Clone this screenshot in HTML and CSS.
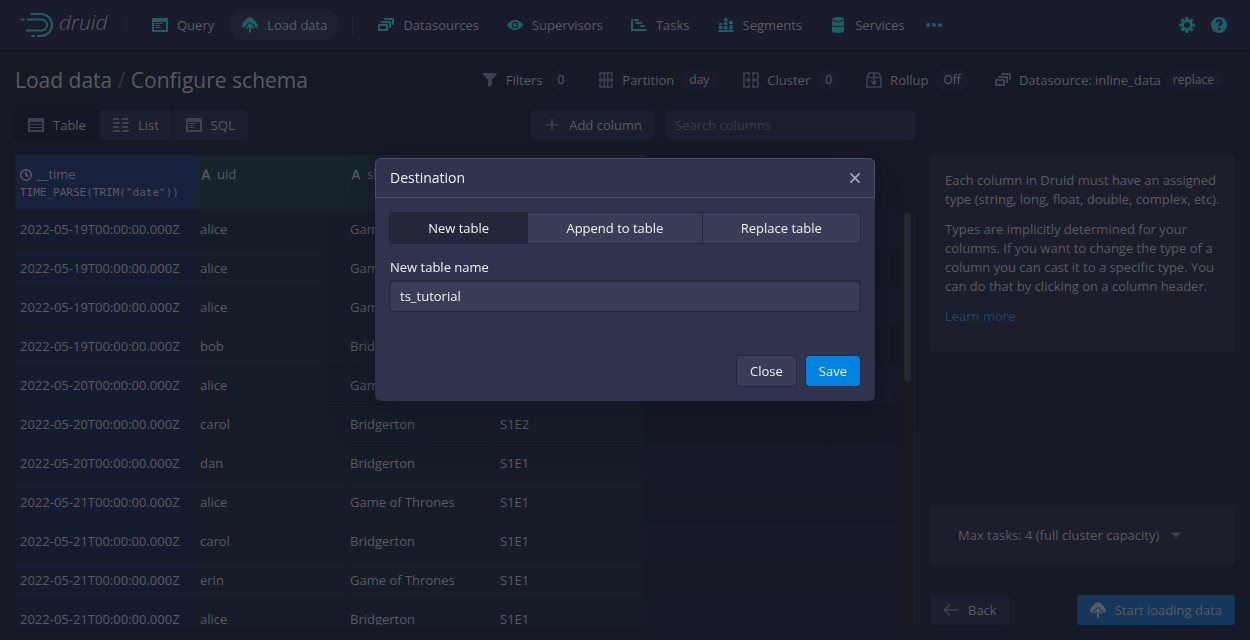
FILE: index.html
```html
<!DOCTYPE html>
<html lang="en">
<head>
<meta charset="utf-8">
<title>Druid - Load data</title>
<link rel="stylesheet" href="styles.css">
</head>
<body>
<svg class="sprite" aria-hidden="true">
  <symbol id="application" viewBox="0 0 16 16"><path d="M3.5 7h7c.28 0 .5-.22.5-.5s-.22-.5-.5-.5h-7c-.28 0-.5.22-.5.5s.22.5.5.5zM15 1H1c-.55 0-1 .45-1 1v12c0 .55.45 1 1 1h14c.55 0 1-.45 1-1V2c0-.55-.45-1-1-1zm-1 12H2V5h12v8zM3.5 9h4c.28 0 .5-.22.5-.5S7.78 8 7.5 8h-4c-.28 0-.5.22-.5.5s.22.5.5.5zm0 2h5c.28 0 .5-.22.5-.5s-.22-.5-.5-.5h-5c-.28 0-.5.22-.5.5s.22.5.5.5z"/></symbol>
  <symbol id="cloud-upload" viewBox="0 0 16 16"><path d="M8.710 6.600a1 1 0 00-1.420 0l-3.300 3.300a1 1 0 001.420 1.420L7 9.730V15a1 1 0 002 0V9.730l1.590 1.590a1 1 0 001.420-1.420zM12.200 3.200C11.500 1.300 9.900.2 8 .2S4.500 1.300 3.900 3.100C2.500 3.300 1.700 4.300 1.600 5.700.6 6.300 0 7.300 0 8.500c0 1.400.8 2.500 2.200 2.800.1-1 .4-1.700 1-2.300L6.400 5.800c.9-.9 2.300-.9 3.200 0L12.800 9c.6.6.9 1.400 1 2.300 1.400-.3 2.200-1.400 2.200-2.800 0-1.200-.6-2.200-1.600-2.800-.1-1.400-.9-2.300-2.200-2.500z"/></symbol>
  <symbol id="multi-select" viewBox="0 0 16 16"><path d="M12 3.980H4c-.55 0-1 .45-1 1v1h8v5h1c.55 0 1-.45 1-1v-5c0-.55-.45-1-1-1zm3-3H7c-.55 0-1 .45-1 1v1h8v5h1c.55 0 1-.45 1-1v-5c0-.55-.45-1-1-1zm-6 6H1c-.55 0-1 .45-1 1v5c0 .55.45 1 1 1h8c.55 0 1-.45 1-1v-5c0-.55-.45-1-1-1zm-1 5H2v-3h6v3z"/></symbol>
  <symbol id="eye" viewBox="0 0 16 16"><path fill-rule="evenodd" d="M8 3C4.500 3 1.500 5.400 0 8c1.500 2.600 4.500 5 8 5s6.500-2.400 8-5c-1.500-2.600-4.500-5-8-5zm0 1.800a3.200 3.200 0 110 6.400 3.200 3.200 0 010-6.400z"/><path fill-rule="evenodd" d="M8 5.900a2.100 2.100 0 100 4.200 2.100 2.100 0 000-4.200zm.7.800a.7.7 0 110 1.400.7.7 0 010-1.400z"/></symbol>
  <symbol id="gantt" viewBox="0 0 16 16"><path d="M1 2c.6 0 1 .4 1 1v9h13c.6 0 1 .4 1 1s-.4 1-1 1H1c-.6 0-1-.4-1-1V3c0-.6.4-1 1-1zM4 2h3a1 1 0 010 2H4a1 1 0 010-2zM5 5h5a1 1 0 010 2H5a1 1 0 010-2zM10 8h3a1 1 0 010 2h-3a1 1 0 010-2z"/></symbol>
  <symbol id="stacked" viewBox="0 0 16 16"><path d="M1 13h14a1 1 0 010 2H1a1 1 0 010-2zM2 6h2v2H1V7c0-.6.4-1 1-1zM1 9h3.500v3H1zM7 1h1.500c.6 0 1 .4 1 1v2H6V2c0-.6.4-1 1-1zM6 5h3.500v3H6zM6 9h3.500v3H6zM12 4h2c.6 0 1 .4 1 1v2h-4V5c0-.6.4-1 1-1zM11 8h4v1.500h-4zM11 10h4v2h-4z"/></symbol>
  <symbol id="database" viewBox="0 0 16 16"><path d="M8 0c3.300 0 6 .9 6 2s-2.700 2-6 2-6-.9-6-2 2.700-2 6-2zM2 3.600C3.200 4.500 5.500 5 8 5s4.800-.5 6-1.400V7.400C14 8.400 11.300 9.200 8 9.200S2 8.400 2 7.400zM2 8.900c1.200.9 3.500 1.400 6 1.400s4.800-.5 6-1.400V14c0 1.100-2.700 2-6 2s-6-.9-6-2z"/></symbol>
  <symbol id="more" viewBox="0 0 16 16"><circle cx="2" cy="8" r="2"/><circle cx="8" cy="8" r="2"/><circle cx="14" cy="8" r="2"/></symbol>
  <symbol id="cog" viewBox="0 0 16 16"><path d="M15.190 6.390h-1.850c-.11-.37-.27-.71-.45-1.040l1.360-1.360c.31-.31.31-.82 0-1.130l-1.130-1.130c-.31-.31-.82-.31-1.130 0l-1.360 1.360c-.33-.17-.67-.33-1.040-.44V.79c0-.44-.36-.8-.8-.8h-1.600c-.44 0-.8.36-.8.8v1.860c-.39.12-.75.28-1.100.47l-1.300-1.300c-.3-.3-.79-.3-1.090 0L1.820 2.910c-.3.3-.3.79 0 1.090l1.300 1.300c-.2.34-.36.7-.48 1.090H.79c-.44 0-.8.36-.8.8v1.600c0 .44.36.8.8.8h1.850c.11.37.27.71.45 1.040l-1.360 1.360c-.31.31-.31.82 0 1.130l1.130 1.130c.31.31.82.31 1.130 0l1.360-1.360c.33.18.67.33 1.040.44v1.860c0 .44.36.8.8.8h1.600c.44 0 .8-.36.8-.8v-1.860c.39-.12.75-.28 1.100-.47l1.300 1.300c.3.3.79.3 1.090 0l1.090-1.090c.3-.3.3-.79 0-1.090l-1.300-1.300c.19-.35.36-.71.48-1.100h1.850c.44 0 .8-.36.8-.8v-1.600a.816.816 0 00-.81-.79zm-7.200 4.600c-1.660 0-3-1.340-3-3s1.340-3 3-3 3 1.340 3 3-1.340 3-3 3z"/></symbol>
  <symbol id="help" viewBox="0 0 16 16"><circle cx="8" cy="8" r="8"/><path class="cut-line" d="M5.600 5.800C5.600 4.400 6.600 3.600 8 3.600s2.500.8 2.500 2.100c0 1.600-2.400 1.700-2.400 3.900"/><path class="cut" d="M7 11h2v2H7z"/></symbol>
  <symbol id="filter" viewBox="0 0 16 16"><path d="M13.990.99h-12a1.003 1.003 0 00-.71 1.710l4.710 4.710V14a1.003 1.003 0 001.710.71l2-2c.18-.18.29-.43.29-.71V7.410L14.700 2.700a1.003 1.003 0 00-.71-1.710z"/></symbol>
  <symbol id="split" viewBox="0 0 16 16"><path class="line-mid" d="M2 4.500V1H6.300V15H2V11.500M14 4.500V1H9.700V15H14V11.500M6 1H10M6 15H10M1 8H15M3.300 5.700L1 8L3.300 10.300M12.700 5.700L15 8L12.700 10.300"/></symbol>
  <symbol id="merge" viewBox="0 0 16 16"><path class="line-mid" d="M6 4.500V1H1V15H6V11.500M10 4.500V1H15V15H10V11.500M2 8H6.500M14 8H9.500M4.500 5.800L6.700 8L4.500 10.200M11.500 5.800L9.300 8L11.500 10.200"/></symbol>
  <symbol id="compressed" viewBox="0 0 16 16"><path class="line-mid" d="M1 5.500L3 1H13L15 5.500V15H1ZM1 5.500H15M8 1V12M5 9L8 12L11 9"/></symbol>
  <symbol id="table-icon" viewBox="0 0 16 16"><path fill-rule="evenodd" d="M1 1h14c.6 0 1 .4 1 1v12c0 .6-.4 1-1 1H1c-.6 0-1-.4-1-1V2c0-.6.4-1 1-1zm1 4v2h12V5zm0 3v2h12V8zm0 3v2h12v-2z"/></symbol>
  <symbol id="list-columns" viewBox="0 0 16 16"><path d="M0 1h6v2H0zM0 5h7v2H0zM0 9h6v2H0zM0 13h7v2H0zM9 1h6v2H9zM9 5h7v2H9zM9 9h6v2H9zM9 13h7v2H9z"/></symbol>
  <symbol id="plus" viewBox="0 0 16 16"><path class="line-mid" d="M8 2V14M2 8H14"/></symbol>
  <symbol id="time" viewBox="0 0 16 16"><path class="line" d="M8 1a7 7 0 100 14A7 7 0 008 1zM8 3.500V8.500L11 10"/></symbol>
  <symbol id="font" viewBox="0 0 16 16"><path class="line" d="M3 14L7.500 2H8.500L13 14M4.500 10H11.500"/></symbol>
  <symbol id="arrow-left" viewBox="0 0 16 16"><path class="line-mid" d="M15 8H2M7 2.500L1.500 8L7 13.500"/></symbol>
  <symbol id="cross" viewBox="0 0 16 16"><path class="line-mid" d="M3.400 3.400L12.600 12.600M12.600 3.400L3.400 12.600"/></symbol>
  <symbol id="caret" viewBox="0 0 16 16"><path d="M4 5.500h8c.5 0 .7.500.4.850L8.500 10.500a.7.7 0 01-1 0L3.600 6.350C3.300 6 3.500 5.500 4 5.500z"/></symbol>
</svg>

<header class="topbar">
  <a class="logo" href="#" aria-label="druid">
    <svg class="logo-mark" viewBox="0 0 33 26"><path d="M9.500 2H20A11 11 0 0120 24H16M14 24H10M6 7.500H20.500A5.500 5.500 0 0120.500 18.500H5M0 7.500H3.500"/></svg>
    <span class="logo-text">druid</span>
  </a>
  <span class="divider"></span>
  <nav class="nav">
    <a class="btn" href="#"><svg class="icon"><use href="#application"/></svg>Query</a>
    <a class="btn active" href="#"><svg class="icon"><use href="#cloud-upload"/></svg>Load data</a>
  </nav>
  <span class="divider"></span>
  <nav class="nav">
    <a class="btn" href="#"><svg class="icon"><use href="#multi-select"/></svg>Datasources</a>
    <a class="btn" href="#"><svg class="icon"><use href="#eye"/></svg>Supervisors</a>
    <a class="btn" href="#"><svg class="icon"><use href="#gantt"/></svg>Tasks</a>
    <a class="btn" href="#"><svg class="icon"><use href="#stacked"/></svg>Segments</a>
    <a class="btn" href="#"><svg class="icon"><use href="#database"/></svg>Services</a>
    <button class="btn icon-only" type="button" aria-label="More"><svg class="icon"><use href="#more"/></svg></button>
  </nav>
  <div class="nav nav-right">
    <button class="btn icon-only" type="button" aria-label="Settings"><svg class="icon"><use href="#cog"/></svg></button>
    <button class="btn icon-only" type="button" aria-label="Help"><svg class="icon"><use href="#help"/></svg></button>
  </div>
</header>

<main class="page">
  <div class="title-row">
    <h1 class="title">Load data <span class="slash">/</span> Configure schema</h1>
    <div class="steps">
      <button class="btn" type="button"><svg class="icon"><use href="#filter"/></svg>Filters <span class="pill">0</span></button>
      <button class="btn" type="button"><svg class="icon"><use href="#split"/></svg>Partition <span class="pill">day</span></button>
      <button class="btn" type="button"><svg class="icon"><use href="#merge"/></svg>Cluster <span class="pill">0</span></button>
      <button class="btn" type="button"><svg class="icon"><use href="#compressed"/></svg>Rollup <span class="pill">Off</span></button>
      <button class="btn tight" type="button"><svg class="icon"><use href="#multi-select"/></svg>Datasource: inline_data <span class="pill">replace</span></button>
    </div>
  </div>

  <div class="columns">
    <section class="left">
      <div class="toolbar">
        <div class="group">
          <button class="btn solid pressed" type="button"><svg class="icon"><use href="#table-icon"/></svg>Table</button>
          <button class="btn solid" type="button"><svg class="icon"><use href="#list-columns"/></svg>List</button>
          <button class="btn solid" type="button"><svg class="icon"><use href="#application"/></svg>SQL</button>
        </div>
        <button class="btn solid add" type="button"><svg class="icon"><use href="#plus"/></svg>Add column</button>
        <input class="search" type="search" placeholder="Search columns" aria-label="Search columns">
      </div>
      <div class="preview">
        <table class="grid">
          <colgroup><col class="c-time"><col class="c-dim"><col class="c-dim"><col class="c-dim"><col></colgroup>
          <thead>
            <tr>
              <th class="time"><span class="head"><svg class="icon-sm"><use href="#time"/></svg>__time</span><code>TIME_PARSE(TRIM("date"))</code></th>
              <th class="dim"><span class="head"><svg class="icon-sm"><use href="#font"/></svg>uid</span></th>
              <th class="dim"><span class="head"><svg class="icon-sm"><use href="#font"/></svg>show</span></th>
              <th class="dim"><span class="head"><svg class="icon-sm"><use href="#font"/></svg>episode</span></th>
              <td></td>
            </tr>
          </thead>
          <tbody>
            <tr><td>2022-05-19T00:00:00.000Z</td><td>alice</td><td>Game of Thrones</td><td>S1E1</td><td></td></tr>
            <tr><td>2022-05-19T00:00:00.000Z</td><td>alice</td><td>Game of Thrones</td><td>S1E2</td><td></td></tr>
            <tr><td>2022-05-19T00:00:00.000Z</td><td>alice</td><td>Game of Thrones</td><td>S1E1</td><td></td></tr>
            <tr><td>2022-05-19T00:00:00.000Z</td><td>bob</td><td>Bridgerton</td><td>S1E1</td><td></td></tr>
            <tr><td>2022-05-20T00:00:00.000Z</td><td>alice</td><td>Game of Thrones</td><td>S1E1</td><td></td></tr>
            <tr><td>2022-05-20T00:00:00.000Z</td><td>carol</td><td>Bridgerton</td><td>S1E2</td><td></td></tr>
            <tr><td>2022-05-20T00:00:00.000Z</td><td>dan</td><td>Bridgerton</td><td>S1E1</td><td></td></tr>
            <tr><td>2022-05-21T00:00:00.000Z</td><td>alice</td><td>Game of Thrones</td><td>S1E1</td><td></td></tr>
            <tr><td>2022-05-21T00:00:00.000Z</td><td>carol</td><td>Bridgerton</td><td>S1E1</td><td></td></tr>
            <tr><td>2022-05-21T00:00:00.000Z</td><td>erin</td><td>Game of Thrones</td><td>S1E1</td><td></td></tr>
            <tr><td>2022-05-21T00:00:00.000Z</td><td>alice</td><td>Bridgerton</td><td>S1E1</td><td></td></tr>
          </tbody>
        </table>
        <div class="track"><div class="thumb"></div></div>
      </div>
    </section>

    <aside class="side">
      <div class="card">
        <p>Each column in Druid must have an assigned type (string, long, float, double, complex, etc).</p>
        <p>Types are implicitly determined for your columns. If you want to change the type of a column you can cast it to a specific type. You can do that by clicking on a column header.</p>
        <p><a class="link" href="#">Learn more</a></p>
      </div>
      <div class="card tasks">
        <button class="btn" type="button">Max tasks: 4 (full cluster capacity)<svg class="icon"><use href="#caret"/></svg></button>
      </div>
      <div class="actions">
        <button class="btn solid" type="button"><svg class="icon"><use href="#arrow-left"/></svg>Back</button>
        <button class="btn start" type="button"><svg class="icon"><use href="#cloud-upload"/></svg>Start loading data</button>
      </div>
    </aside>
  </div>
</main>

<div class="overlay">
  <form class="dialog" role="dialog" aria-labelledby="dialog-title">
    <div class="dialog-header">
      <h2 class="dialog-title" id="dialog-title">Destination</h2>
      <button class="dialog-x" type="button" aria-label="Dismiss"><svg class="icon"><use href="#cross"/></svg></button>
    </div>
    <div class="dialog-body">
      <div class="choices">
        <button class="dbtn chosen" type="button">New table</button>
        <button class="dbtn" type="button">Append to table</button>
        <button class="dbtn" type="button">Replace table</button>
      </div>
      <label class="label" for="table-name">New table name</label>
      <input class="field" id="table-name" type="text" value="ts_tutorial">
    </div>
    <div class="dialog-footer">
      <button class="dbtn" type="button">Close</button>
      <button class="dbtn primary" type="submit">Save</button>
    </div>
  </form>
</div>
</body>
</html>
```
FILE: styles.css
```css
:root {
  --bg: #161926;
  --bar: #1a1c2e;
  --solid: #1c1f2f;
  --card: #1c1e2c;
  --text: #5a5b61;
  --icon: #3f4150;
  --teal: #1d5e69;
  --line: #151824;
}

* { box-sizing: border-box; }

body {
  margin: 0;
  height: 100vh;
  display: flex;
  flex-direction: column;
  overflow: hidden;
  background: var(--bg);
  color: var(--text);
  font: 13px/19px "Open Sans", "Noto Sans", sans-serif;
}

button, input { font: inherit; color: inherit; }
.sprite { display: none; }

.icon { width: 16px; height: 16px; flex: none; fill: currentColor; color: var(--icon); }
.icon-sm { width: 12px; height: 12px; flex: none; fill: currentColor; }
.line { fill: none; stroke: currentColor; stroke-width: 2; }
.line-mid { fill: none; stroke: currentColor; stroke-width: 1.6; }

.btn {
  display: flex;
  align-items: center;
  gap: 9px;
  height: 30px;
  padding: 0 13px;
  border: 0;
  border-radius: 3px;
  background: none;
  color: var(--text);
  text-decoration: none;
  white-space: nowrap;
}
.solid { background: var(--solid); box-shadow: 0 0 0 1px #151823; }
.pressed { background: #151824; box-shadow: 0 0 0 1px #131520; }

/* Top bar */
.topbar {
  flex: none;
  display: flex;
  align-items: center;
  height: 50px;
  padding: 0 16px 0 21px;
  background: var(--bar);
  box-shadow: 0 1px 2px #12141f;
}
.topbar .icon { color: var(--teal); }
.logo { display: flex; align-items: center; gap: 5px; width: 93px; text-decoration: none; color: #5c5d66; }
.logo-mark { width: 33px; height: 26px; fill: none; stroke: var(--teal); stroke-width: 2; }
.logo-text { font-size: 21px; line-height: 26px; font-style: italic; font-weight: 300; padding-bottom: 6px; }
.divider { width: 1px; height: 20px; margin: 0 12px; background: #252735; }
.nav { display: flex; gap: 2px; }
.nav .btn { border-radius: 15px; }
.nav .active { background: #1e2131; }
.nav .icon-only { padding: 0 7px; }
.nav-right { margin-left: auto; }
.cut { fill: var(--bar); }
.cut-line { fill: none; stroke: var(--bar); stroke-width: 2; }

/* Page */
.page { flex: 1; min-height: 0; display: flex; flex-direction: column; padding: 15px; gap: 15px; }
.title-row { display: flex; align-items: center; justify-content: space-between; height: 30px; }
.title { margin: 0; font-size: 21px; line-height: 30px; font-weight: 400; white-space: nowrap; }
.slash { color: #34363f; }
.steps { display: flex; }
.steps .btn { gap: 7px; }
.steps .tight { gap: 4px; }
.steps .icon { margin-right: 1px; }
.steps .tight .icon { margin-right: 4px; }
.pill { height: 20px; padding: 0 8px; border-radius: 10px; background: #1a1c2c; font-size: 12px; line-height: 20px; }

.columns { flex: 1; min-height: 0; display: flex; gap: 15px; }
.left { flex: 1; min-width: 0; display: flex; flex-direction: column; gap: 15px; }
.toolbar { display: flex; gap: 10px; }
.group { display: flex; gap: 1px; margin-right: auto; }
.group .btn { border-radius: 0; }
.group .btn:first-child { border-radius: 3px 0 0 3px; }
.group .btn:last-child { border-radius: 0 3px 3px 0; }
.search {
  width: 250px;
  height: 30px;
  padding: 0 10px;
  border: 0;
  border-radius: 3px;
  background: var(--solid);
  box-shadow: 0 0 0 1px #151823;
  outline: none;
}
.search::placeholder { color: #3b3d4b; opacity: 1; }

/* Data preview */
.preview { flex: 1; min-height: 0; display: flex; position: relative; overflow: hidden; }
.grid { flex: 1; align-self: flex-start; table-layout: fixed; border-collapse: separate; border-spacing: 0; width: 100%; }
.c-time { width: 180px; }
.c-dim { width: 150px; }
.grid th { height: 55px; padding: 10px 5px 0; text-align: left; vertical-align: top; font-weight: 400; border-right: 1px solid #162028; }
.grid .time { background: #18213d; border-color: #18213d; }
.grid .dim { background: #17242b; }
.head { display: flex; align-items: center; gap: 5px; }
.grid code { display: block; font: 11px/18px "DejaVu Sans Mono", monospace; white-space: nowrap; }
.grid tbody td { height: 39px; padding: 0 5px; border-bottom: 1px solid var(--line); background: #161d29; border-right: 1px solid #151a26; }
.grid tbody td:first-child { background: #161c2f; }
.grid tbody td:last-child { background: #171a2a; border-right: 0; }
.grid tbody tr:nth-child(even) td:last-child { background: #161825; }
.track { position: absolute; top: 55px; right: 0; bottom: 0; width: 15px; padding: 3px 3px 0 4px; background: #181a20; border-right: 1px solid #22242b; }
.thumb { height: 41%; border-radius: 4px; background: #292b34; }

/* Side panel */
.side { width: 305px; display: flex; flex-direction: column; padding-top: 45px; }
.card { padding: 16px 15px 15px; border-radius: 3px; background: var(--card); }
.card p { margin: 0 0 11px; }
.link { color: #1b476d; text-decoration: none; }
.tasks { margin-top: auto; padding: 15px; }
.actions { display: flex; justify-content: space-between; margin-top: 30px; }
.start { background: #16365c; }
.start .icon { color: var(--text); }

/* Dialog */
.overlay { position: fixed; inset: 0; display: flex; justify-content: center; align-items: flex-start; padding-top: 158px; }
.dialog {
  width: 500px;
  border-radius: 6px;
  background: #2f334d;
  box-shadow: 0 0 0 1px rgba(16, 22, 26, .1), 0 4px 8px rgba(16, 22, 26, .2), 0 18px 46px 6px rgba(16, 22, 26, .2);
  color: #f0f1f5;
}
.dialog-header {
  display: flex;
  align-items: center;
  justify-content: space-between;
  height: 40px;
  padding: 0 11px 0 14px;
  border: 1px solid #4d5069;
  border-radius: 6px 6px 0 0;
}
.dialog-title { margin: 0; font-size: 14px; line-height: 20px; font-weight: 500; }
.dialog-x { display: flex; padding: 0; border: 0; background: none; }
.dialog-x .icon { color: #a5a7b9; }
.dialog-body { display: flex; flex-direction: column; padding: 15px 15px 45px; }
.choices { display: flex; gap: 1px; margin-bottom: 15px; }
.choices .dbtn { flex: 1 1 auto; border-radius: 0; }
.choices .dbtn:first-child { border-radius: 3px 0 0 3px; }
.choices .dbtn:last-child { border-radius: 0 3px 3px 0; }
.dbtn {
  height: 30px;
  padding: 0 13px;
  border: 0;
  border-radius: 3px;
  background: #393d57;
  box-shadow: 0 0 0 1px #25283b;
}
.dbtn.chosen { background: #25283a; box-shadow: 0 0 0 1px #212433; }
.label { margin-bottom: 4px; }
.field {
  height: 30px;
  padding: 0 10px;
  border: 0;
  border-radius: 3px;
  outline: none;
  background: #393d57;
  box-shadow: 0 0 0 1px #25283b, inset 0 1px 2px #25283b;
}
.dialog-footer { display: flex; justify-content: flex-end; gap: 10px; padding: 0 15px 15px; }
.dbtn.primary { background: #0082e0; }
```
